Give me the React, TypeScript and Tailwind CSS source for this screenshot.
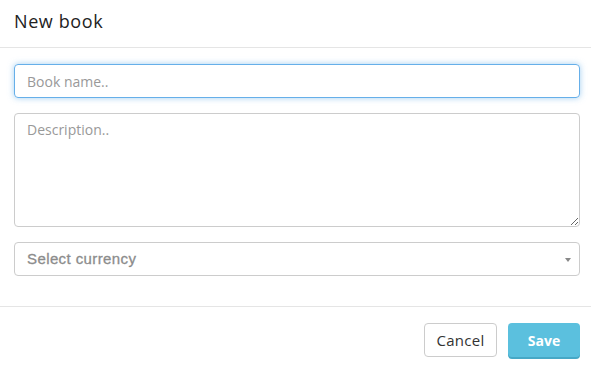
export default function App() {
  return (
    <div className="w-[591px] h-[366px] bg-white font-['Open_Sans',sans-serif] text-[#333]">
      <div className="h-[48px] border-b border-[#e5e5e5] pl-[14px] flex items-center">
        <h4 className="text-[18px] tracking-[0.6px] text-[#222] leading-none -mt-[6px]">New book</h4>
      </div>
      <div className="pl-[14px] pr-[11px] pt-[16px] pb-[30px] flex flex-col gap-[15px]">
        <input
          className="h-[34px] w-full rounded-[4px] border border-[#66afe9] px-[12px] text-[14px] outline-none shadow-[0_0_6px_rgba(102,175,233,0.6)] placeholder:text-[#999]"
          placeholder="Book name.."
        />
        <textarea
          className="h-[114px] w-full rounded-[4px] border border-[#ccc] px-[12px] py-[5px] text-[14px] outline-none placeholder:text-[#999]"
          placeholder="Description.."
        />
        <div className="h-[34px] w-full rounded-[4px] border border-[#ccc] pl-[12px] pr-[8px] flex items-center justify-between">
          <span className="font-['Liberation_Sans',sans-serif] text-[15px] tracking-[0.4px] text-[#8c8c8c] [-webkit-text-stroke:0.3px_#8c8c8c]">Select currency</span>
          <svg width="6" height="4" viewBox="0 0 6 4" className="mt-[1px]">
            <path d="M0 0H6L3 4Z" fill="#888" />
          </svg>
        </div>
      </div>
      <div className="border-t border-[#e5e5e5] pt-[16px] pr-[11px] flex justify-end gap-[11px]">
        <button className="h-[34px] w-[73px] rounded-[4px] border border-[#ccc] bg-white text-[15px] tracking-[0.3px] text-[#333]">
          Cancel
        </button>
        <button className="h-[34px] w-[72px] rounded-[4px] bg-[#5bc0de] text-[14px] font-bold text-white shadow-[0_2px_0_#46a8c6]">
          Save
        </button>
      </div>
    </div>
  );
}
